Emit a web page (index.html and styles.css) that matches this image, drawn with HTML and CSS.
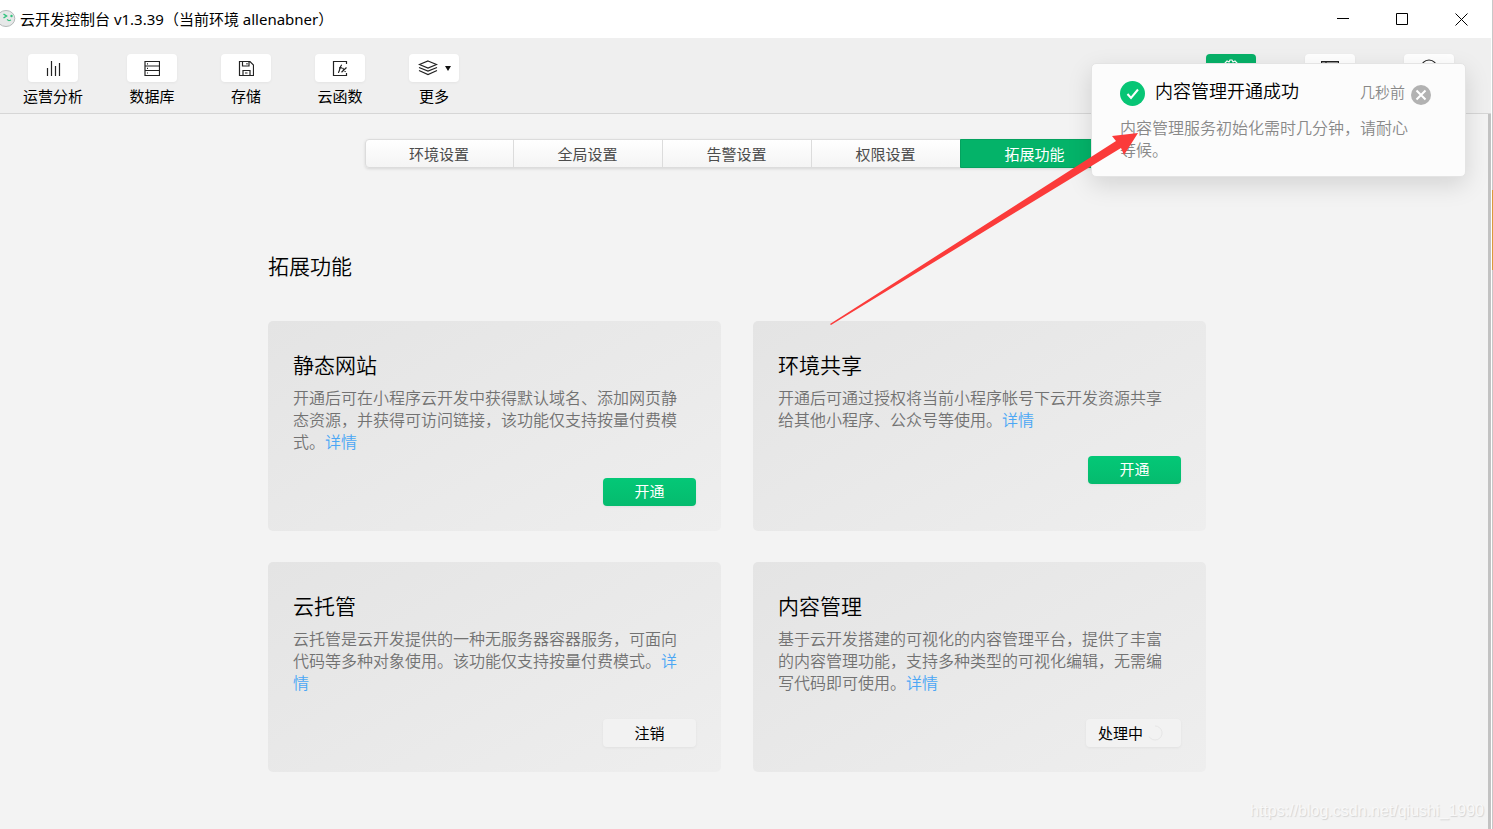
FILE: index.html
```html
<!DOCTYPE html>
<html lang="zh-CN">
<head>
<meta charset="utf-8">
<title>云开发控制台</title>
<link rel="stylesheet" href="styles.css">
</head>
<body>
<div class="desktop">
  <div class="window">
    <header class="titlebar">
      <svg class="app-logo" width="16" height="20" viewBox="0 0 16 20" aria-hidden="true">
        <ellipse cx="6" cy="9.500" rx="8.800" ry="8" fill="#e6e8e8" stroke="#b4b8b8"/>
        <path d="M3.500 5l3 2-3 2" fill="none" stroke="#2fc27c" stroke-width="1.500"/>
        <circle cx="11.500" cy="7" r="1.200" fill="#2fc27c"/>
        <path d="M7 10.500l2 1.200 2-.7" fill="none" stroke="#2fc27c" stroke-width="1.200"/>
      </svg>
      <h1 class="app-title">云开发控制台 v1.3.39（当前环境 allenabner）</h1>
      <div class="window-controls">
        <button type="button" aria-label="最小化"><svg width="13" height="13"><path d="M0 5.500h12"/></svg></button>
        <button type="button" aria-label="最大化"><svg width="13" height="13"><path d="M.5.5h11v11h-11z"/></svg></button>
        <button type="button" aria-label="关闭"><svg width="13" height="13"><path d="M.5.500l12 12M12.500.500l-12 12"/></svg></button>
      </div>
    </header>

    <nav class="toolbar">
      <div class="tool-group">
        <button type="button" class="tool">
          <span class="tool-icon"><svg width="16" height="18" viewBox="0 0 16 18"><path d="M2.500 9v8M6.500 2v15M10.500 7v10M14.500 4v13"/></svg></span>
          运营分析
        </button>
        <button type="button" class="tool">
          <span class="tool-icon"><svg width="16" height="16" viewBox="0 0 16 16"><path d="M1 1.500h14.500v14H1zM1 6h14.500M1 10.500h14.500M3 3.800h1M3 8.300h1M3 13h1"/></svg></span>
          数据库
        </button>
        <button type="button" class="tool">
          <span class="tool-icon"><svg width="16" height="16" viewBox="0 0 16 16"><path d="M1.500 1.500H12l3.500 3.500v10.500h-14zM4.500 1.500V6h6.500V1.500M9 3v1.500M5 15.500v-5h7v5M7 13h2.500"/></svg></span>
          存储
        </button>
        <button type="button" class="tool">
          <span class="tool-icon"><svg width="16" height="16" viewBox="0 0 16 16"><path d="M14.500 4V1.500h-13v14h13V13"/><path d="M6 12.500c2 0 1.500-7.500 4-7.500M7 7.800h3M10.500 7.800l3 4.200M14.500 7.500L9.500 12.300"/></svg></span>
          云函数
        </button>
        <button type="button" class="tool">
          <span class="tool-icon tool-icon-menu"><svg width="20" height="16" viewBox="0 0 20 16"><path d="M10 1l8.500 3.500L10 8 1.500 4.500zM1 7.500l9 3.500 9-3.500M1 10.500l9 4 9-4"/></svg><svg width="6" height="5" viewBox="0 0 6 5"><path class="solid" d="M0 0h6L3 5z"/></svg></span>
          更多
        </button>
      </div>
      <div class="tool-group tool-group-end">
        <button type="button" class="tool" aria-label="设置"><span class="tool-icon tool-icon-active"><svg width="18" height="18" viewBox="0 0 18 18"><circle cx="9" cy="9" r="3"/><path d="M7 3l1-2h2l1 2 2-1 2 2-1 2 2 1v4l-2 1 1 2-2 2-2-1-1 2H8l-1-2-2 1-2-2 1-2-2-1V7l2-1-1-2 2-2z"/></svg></span></button>
        <button type="button" class="tool" aria-label="费用"><span class="tool-icon"><svg width="18" height="16" viewBox="0 0 18 16"><path d="M.5 1.500h17v12H.5zM.5 3h17M5 1.500V4"/></svg></span></button>
        <button type="button" class="tool" aria-label="帮助"><span class="tool-icon"><svg width="18" height="18" viewBox="0 0 18 18"><circle cx="9" cy="9" r="8"/></svg></span></button>
      </div>
    </nav>

    <main class="page">
      <div class="tabs" role="tablist">
        <button type="button" role="tab">环境设置</button>
        <button type="button" role="tab">全局设置</button>
        <button type="button" role="tab">告警设置</button>
        <button type="button" role="tab">权限设置</button>
        <button type="button" role="tab" class="active" aria-selected="true">拓展功能</button>
      </div>
      <section class="features">
        <h2 class="section-title">拓展功能</h2>
        <div class="cards">
          <article class="card">
            <h3>静态网站</h3>
            <p>开通后可在小程序云开发中获得默认域名、添加网页静态资源，并获得可访问链接，该功能仅支持按量付费模式。<a href="#">详情</a></p>
            <button type="button" class="btn btn-primary">开通</button>
          </article>
          <article class="card">
            <h3>环境共享</h3>
            <p>开通后可通过授权将当前小程序帐号下云开发资源共享给其他小程序、公众号等使用。<a href="#">详情</a></p>
            <button type="button" class="btn btn-primary">开通</button>
          </article>
          <article class="card">
            <h3>云托管</h3>
            <p>云托管是云开发提供的一种无服务器容器服务，可面向代码等多种对象使用。该功能仅支持按量付费模式。<a href="#">详情</a></p>
            <button type="button" class="btn">注销</button>
          </article>
          <article class="card">
            <h3>内容管理</h3>
            <p>基于云开发搭建的可视化的内容管理平台，提供了丰富的内容管理功能，支持多种类型的可视化编辑，无需编写代码即可使用。<a href="#">详情</a></p>
            <button type="button" class="btn btn-busy">处理中<svg width="16" height="16" viewBox="0 0 16 16"><path d="M8 1a7 7 0 1 1-6 10.500"/></svg></button>
          </article>
        </div>
      </section>
    </main>
  </div>
  <div class="backdrop"></div>

  <aside class="notice" role="status">
    <div class="notice-head">
      <svg width="26" height="26" viewBox="0 0 26 26" aria-hidden="true"><circle cx="12.500" cy="12.500" r="12.500" fill="#07c575"/><path d="M7.500 13l3.500 4 7-8.500" fill="none" stroke="#fff" stroke-width="2"/></svg>
      <strong>内容管理开通成功</strong>
      <time>几秒前</time>
      <button type="button" aria-label="关闭通知"><svg width="20" height="20" viewBox="0 0 20 20"><circle cx="10" cy="10" r="10" fill="#b2b2b2"/><path d="M5.500 5.500l9 9M14.500 5.500l-9 9" stroke="#fff" stroke-width="2"/></svg></button>
    </div>
    <p>内容管理服务初始化需时几分钟，请耐心等候。</p>
  </aside>

  <svg class="pointer" width="310" height="194" viewBox="0 0 310 194" aria-hidden="true"><path d="M0 193L286 10 282 5 308 2 294 24 291 17 1 194z" fill="#fb3b3a"/></svg>
  <div class="watermark">https://blog.csdn.net/qiushi_1990</div>
</div>
</body>
</html>
```
FILE: styles.css
```css
* { box-sizing: border-box; }

body {
  margin: 0;
  font: 15px/22px "Noto Sans", "Noto Sans CJK SC", sans-serif;
  color: #000;
  background: #f3f3f3;
}

h1, h2, h3, p { margin: 0; font-weight: 350; }

button {
  margin: 0;
  padding: 0;
  border: 0;
  background: none;
  font: inherit;
  color: inherit;
}

svg { display: block; flex: none; }

.desktop {
  position: relative;
  display: flex;
  min-height: 100vh;
  overflow: hidden;
}

.window {
  display: flex;
  flex-direction: column;
  flex: 1;
  min-width: 0;
  font-family: "Open Sans", "Noto Sans CJK SC", sans-serif;
}

.backdrop {
  width: 2px;
  border-left: 1px solid #fff;
  background: linear-gradient(#c8c8c8 190px, #d99a3c 190px, #d99a3c 270px, #c8c8c8 270px);
}

/* Title bar */
.titlebar {
  display: flex;
  align-items: center;
  height: 38px;
  background: #fff;
}

.app-title {
  margin-left: 4px;
  font-family: "Noto Sans", "Noto Sans CJK SC", sans-serif;
  font-size: 15px;
  font-weight: 400;
}

.window-controls {
  display: flex;
  margin-left: auto;
}

.window-controls button {
  display: grid;
  place-items: center;
  width: 59px;
  height: 38px;
}

.window-controls svg { fill: none; stroke: #000; }

/* Toolbar */
.toolbar {
  display: flex;
  justify-content: space-between;
  height: 76px;
  padding: 16px 37px 0 23px;
  border-bottom: 1px solid #d6d6d6;
  background: #efefef;
}

.tool-group { display: flex; align-items: flex-start; gap: 44px; }
.tool-group-end { gap: 49px; }

.tool {
  display: flex;
  flex-direction: column;
  align-items: center;
  gap: 3px;
}

.tool-icon {
  display: flex;
  align-items: center;
  justify-content: center;
  width: 50px;
  height: 28px;
  border-radius: 4px;
  background: #fff;
  box-shadow: 0 1px 3px rgba(0, 0, 0, .05);
}

.tool-icon-menu { gap: 7px; }
.tool-icon svg { fill: none; stroke: #222; stroke-width: 1.2; }
.tool-icon .solid { fill: #111; stroke: none; }
.tool-icon-active { background: #07b168; }
.tool-icon-active svg { stroke: #fff; }

/* Page */
.page {
  display: flex;
  flex-direction: column;
  flex: 1;
  align-items: center;
  padding: 25px 14px 57px 0;
  border-right: 3px solid #c2c2c2;
  background: #f3f3f3;
}

.tabs {
  display: flex;
  border: 1px solid #dcdcdc;
  border-radius: 4px;
  background: linear-gradient(#fff, #f4f4f4);
  box-shadow: 0 1px 3px rgba(0, 0, 0, .12);
}

.tabs button {
  width: 149px;
  height: 27px;
  border-right: 1px solid #dcdcdc;
  color: #4c4c4c;
}

.tabs button:first-child { width: 148px; }

.tabs .active {
  margin: -1px;
  width: 150px;
  height: 29px;
  border: 1px solid #05a25f;
  border-radius: 0 4px 4px 0;
  background: #04b369;
  color: #fff;
}

.features {
  width: 100%;
  max-width: 938px;
  margin-top: 82px;
}

.section-title {
  font-size: 21px;
  line-height: 32px;
}

.cards {
  display: grid;
  grid-template-columns: 1fr 1fr;
  gap: 31px 32px;
  margin-top: 39px;
}

.card {
  display: flex;
  flex-direction: column;
  align-items: flex-end;
  padding: 26px 25px 25px;
  border-radius: 5px;
  background: linear-gradient(150deg, #e4e4e4, #eee);
}

.card h3 {
  width: 100%;
  margin-bottom: 4px;
  font-size: 21px;
  line-height: 36px;
}

.card p {
  width: 100%;
  padding-right: 8px;
  font-size: 16px;
  color: #727272;
}

.card a { color: #4ba7f5; text-decoration: none; }

.btn {
  width: 93px;
  height: 28px;
  margin-top: 25px;
  border-radius: 4px;
  background: #f2f2f2;
  box-shadow: 0 1px 3px rgba(0, 0, 0, .05);
}

.btn-primary {
  padding-bottom: 2px;
  background: linear-gradient(#04c877, #05bb6e);
  color: #fff;
}

.btn-busy {
  display: flex;
  align-items: center;
  gap: 4px;
  width: 95px;
  padding-left: 12px;
}

.btn-busy svg { fill: none; stroke: #e6e6e6; }

/* Notification floating over the page */
.notice {
  position: absolute;
  top: 63px;
  right: 27px;
  width: 375px;
  padding: 17px 34px 15px 28px;
  border: 1px solid #e4e4e4;
  border-radius: 5px;
  background: #fcfcfc;
  box-shadow: 0 8px 24px rgba(0, 0, 0, .13);
}

.notice-head {
  display: flex;
  align-items: flex-start;
}

.notice strong {
  margin-left: 9px;
  font-size: 18px;
  line-height: 20px;
  font-weight: 350;
}

.notice time {
  margin-left: auto;
  margin-right: 6px;
  font-weight: 350;
  color: #888;
}

.notice button { margin-top: 4px; }

.notice p {
  padding: 10px 14px 0 0;
  font-size: 16px;
  color: #888;
}

/* Annotation arrow */
.pointer {
  position: absolute;
  top: 131px;
  right: 353px;
}

.watermark {
  position: absolute;
  right: 9px;
  bottom: 7px;
  font: 16px/22px "Liberation Sans", Arial, sans-serif;
  color: #f8f8f8;
  text-shadow: 1px 1px 1px #d4d4d4;
}
```
